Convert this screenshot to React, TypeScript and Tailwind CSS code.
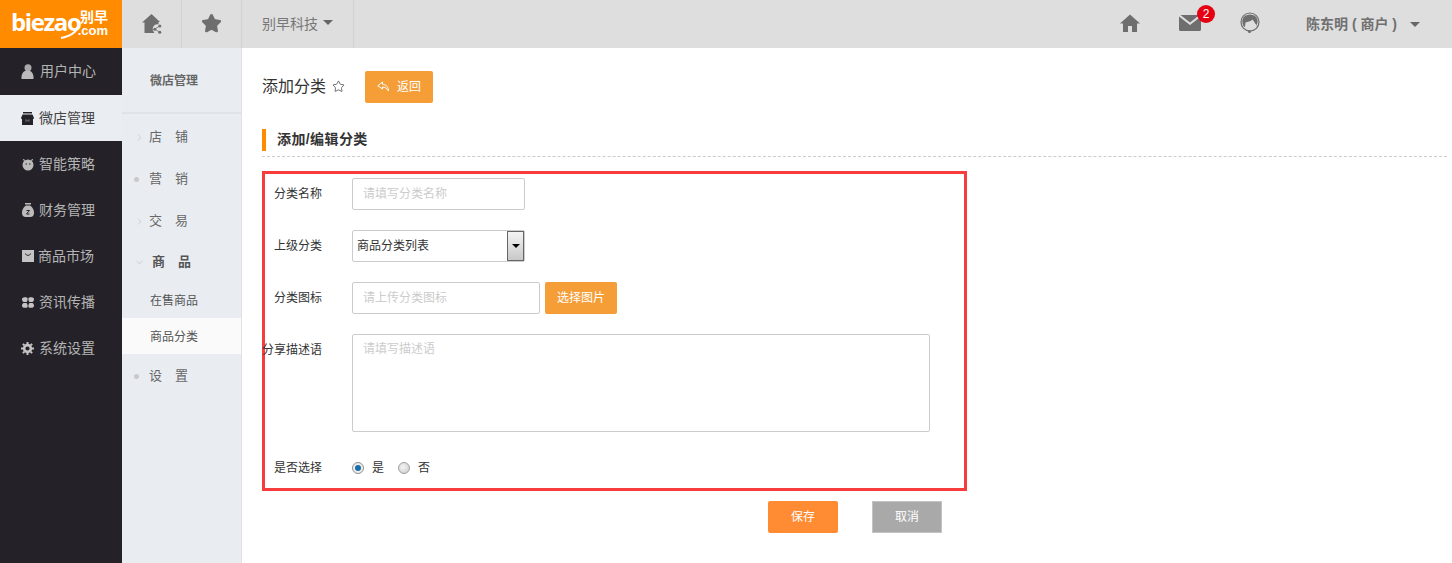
import { ChevronDown, ChevronRight, Star } from "lucide-react";
import type { ReactNode } from "react";

const font = { fontFamily: '"Liberation Sans", "Noto Sans CJK SC", sans-serif' };

function UserIcon() {
  return (
    <svg width="13" height="15" viewBox="0 0 13 15" fill="#bbb">
      <circle cx="7" cy="3.800" r="3.500" fill="#a9a9a9" />
      <path d="M0.500 15 C0 9 3 6.500 6.500 6.500 C10 6.500 13 9 12.500 15 Z" />
    </svg>
  );
}

function ShopIcon() {
  return (
    <svg width="13" height="13" viewBox="0 0 13 13" fill="#242228">
      <path d="M2 0 H11 V1.500 H2 Z" />
      <path d="M1.500 2.500 H11.500 L13 6 V6.500 L12 7 V13 H1 V7 L0 6.500 V6 Z" />
      <path d="M5 10 V7.500 L6.500 9 L8 7.500 V10" stroke="#888" strokeWidth="0.700" fill="none" />
    </svg>
  );
}

function ClockIcon() {
  return (
    <svg width="12" height="13" viewBox="0 0 12 13" fill="#bbb">
      <circle cx="6" cy="7" r="5.500" />
      <path d="M1 1.500 L3 2.500 M11 1.500 L9 2.500" stroke="#bbb" strokeWidth="1.200" />
      <path d="M3.500 6 H5 M7 6 H8.500" stroke="#242228" strokeWidth="1" />
    </svg>
  );
}

function BagIcon() {
  return (
    <svg width="12" height="14" viewBox="0 0 12 14" fill="#bbb">
      <path d="M3 0 H9 V1.500 H3 Z" />
      <path d="M4 2.500 H8 C11 4.500 12 7 12 10 C12 12.500 10.500 14 8.500 14 H3.500 C1.500 14 0 12.500 0 10 C0 7 1 4.500 4 2.500 Z" />
      <path d="M4.500 7.500 H7.500 L4.500 11 H7.500" stroke="#242228" strokeWidth="1" fill="none" />
    </svg>
  );
}

function MarketIcon() {
  return (
    <svg width="12" height="12" viewBox="0 0 12 12" fill="#c4c4c4">
      <rect width="12" height="12" />
      <path d="M3.500 3.500 C4 6 8 6 8.500 3.500" stroke="#242228" strokeWidth="1" fill="none" />
    </svg>
  );
}

function GridIcon() {
  return (
    <svg width="12" height="11" viewBox="0 0 12 11" fill="#c4c4c4">
      <path d="M0 2 C0 0 4.500 -0.500 5.500 1 C5.800 2 5.500 4 4.500 5 H2 C0.500 5 0 3.500 0 2 Z" />
      <path d="M12 2 C12 0 7.500 -0.500 6.500 1 C6.200 2 6.500 4 7.500 5 H10 C11.500 5 12 3.500 12 2 Z" />
      <path d="M0 9 C0 11 4.500 11.500 5.500 10 C5.800 9 5.500 7 4.500 6 H2 C0.500 6 0 7.500 0 9 Z" />
      <path d="M12 9 C12 11 7.500 11.500 6.500 10 C6.200 9 6.500 7 7.500 6 H10 C11.500 6 12 7.500 12 9 Z" />
    </svg>
  );
}

function GearIcon() {
  return (
    <svg width="13" height="13" viewBox="0 0 13 13">
      <circle cx="6.500" cy="6.500" r="3.400" fill="none" stroke="#c4c4c4" strokeWidth="2.600" />
      <path
        d="M6.500 0 V13 M0 6.500 H13 M1.900 1.900 L11.100 11.100 M11.100 1.900 L1.900 11.100"
        stroke="#c4c4c4"
        strokeWidth="2"
        strokeDasharray="2 9 2 0"
      />
    </svg>
  );
}

function HomeShareIcon() {
  return (
    <svg width="20" height="20" viewBox="0 0 20 20" fill="#6e6e6e">
      <path d="M9.500 0 L18 8 H16.500 V19 H2.500 V8.500 H0 Z" />
      <circle cx="15.500" cy="15" r="4.800" fill="#dedede" />
      <circle cx="17.800" cy="12" r="1.500" />
      <circle cx="12.800" cy="15.200" r="1.500" />
      <circle cx="17.800" cy="18.200" r="1.500" />
      <path d="M17.800 12 L12.800 15.200 L17.800 18.200" stroke="#6e6e6e" strokeWidth="0.800" fill="none" />
    </svg>
  );
}

function HomeIcon() {
  return (
    <svg width="20" height="18" viewBox="0 0 20 18" fill="#6e6e6e">
      <path d="M10 0.500 L20 9.500 H17 V18 H12 V12 H8 V18 H3 V9.500 H0 Z" />
    </svg>
  );
}

function MailIcon() {
  return (
    <svg width="22" height="16" viewBox="0 0 22 16" fill="#6e6e6e">
      <path d="M1.500 0 H20.500 L11 7.500 Z" />
      <path d="M0 1.500 L11 10 L22 1.500 V14.500 C22 15.300 21.300 16 20.500 16 H1.500 C0.700 16 0 15.300 0 14.500 Z" />
    </svg>
  );
}

function ServiceIcon() {
  return (
    <svg width="20" height="22" viewBox="0 0 20 22">
      <circle cx="10" cy="10" r="9" fill="none" stroke="#6e6e6e" strokeWidth="1.200" />
      <path
        d="M2.500 11 C1.500 6 5 2.500 10 2.500 C15 2.500 18.500 6 17.500 11 L16 14 C15.500 11 14 9.500 12.500 7.500 C11 9.500 7.500 10 5.500 10.500 L5 15 C3.500 14.500 2.800 13 2.500 11 Z"
        fill="#6e6e6e"
      />
      <path d="M6 11 C6 15 8 17 10 17 C12 17 14 15 14.500 12 L16 12 V15 L10 18 Z" fill="#dedede" />
      <circle cx="9.500" cy="19.500" r="1.600" fill="#6e6e6e" />
    </svg>
  );
}

function Logo() {
  return (
    <div className="flex h-12 w-[122px] shrink-0 items-center bg-[#ff8b00] pl-[11px] text-white">
      <div className="relative w-[67px] pb-[1px]">
        <span
          className="text-[24px] font-bold leading-none tracking-[-1.400px]"
          style={{ fontFamily: '"Open Sans", sans-serif' }}
        >
          biezao
        </span>
        {/* swoosh under and round the last letters */}
        <svg width="24" height="30" viewBox="0 0 24 30" className="absolute -top-[1px] left-[47px]" fill="none" stroke="#fff">
          <path d="M21 12 C22 20 15 27 3 29" strokeWidth="2" />
        </svg>
      </div>
      <div className="flex w-[30px] flex-col items-end">
        <span className="text-[14px] font-bold leading-[13px]">别早</span>
        <span className="text-[13px] font-bold leading-[13px]">.com</span>
      </div>
    </div>
  );
}

const mainMenu: { label: string; icon: ReactNode; cls: string; active?: boolean }[] = [
  { label: "用户中心", icon: <UserIcon />, cls: "h-[47px] gap-[6px] pb-[1px]" },
  { label: "微店管理", icon: <ShopIcon />, cls: "h-[46px] gap-[5px]", active: true },
  { label: "智能策略", icon: <ClockIcon />, cls: "h-[46px] gap-[5px]" },
  { label: "财务管理", icon: <BagIcon />, cls: "h-[46px] gap-[5px]" },
  { label: "商品市场", icon: <MarketIcon />, cls: "h-[46px] gap-[4px]" },
  { label: "资讯传播", icon: <GridIcon />, cls: "h-[46px] gap-[5px]" },
  { label: "系统设置", icon: <GearIcon />, cls: "h-[46px] gap-[5px]" },
];

function MainSidebar() {
  return (
    <div className="w-[122px] shrink-0 bg-[#242228]">
      {mainMenu.map((item) => (
        <div
          key={item.label}
          className={`flex items-center pl-[21px] text-[14px] ${item.cls} ${
            item.active ? "bg-[#eaedf1] text-[#444]" : "text-[#b4b4b4]"
          }`}
        >
          <span className="flex w-[13px] justify-center">{item.icon}</span>
          {item.label}
        </div>
      ))}
    </div>
  );
}

function SubGroup({ label, mark, bold }: { label: string; mark: "right" | "dot" | "down"; bold?: boolean }) {
  return (
    <div className={bold ? "flex h-[40px] items-center pl-[12px]" : "flex h-[42px] items-center pl-[12px]"}>
      <span className="flex w-[15px] items-center">
        {mark === "right" && <ChevronRight size={11} strokeWidth={1} className="text-[#aaa]" />}
        {mark === "down" && <ChevronDown size={11} strokeWidth={1} className="text-[#aaa]" />}
        {mark === "dot" && <span className="h-[5px] w-[5px] rounded-full bg-[#c8c8c8]" />}
      </span>
      <span className={bold ? "pl-[3px] text-[13px] font-bold tracking-[13px] text-[#555]" : "text-[13px] tracking-[13px] text-[#666]"}>
        {label}
      </span>
    </div>
  );
}

function SubSidebar() {
  return (
    <div className="w-[120px] shrink-0 border-r border-[#dfe3e8] bg-[#e9edf2]">
      <div className="flex h-[66px] items-center border-b-2 border-[#dfe3e8] pl-[28px] pt-[2px] text-[12px] font-bold text-[#666]">
        微店管理
      </div>
      <div className="pt-[2px]">
        <SubGroup label="店铺" mark="right" />
        <SubGroup label="营销" mark="dot" />
        <SubGroup label="交易" mark="right" />
        <SubGroup label="商品" mark="down" bold />
        <div className="flex h-[36px] items-center pl-[28px] pt-[1px] text-[12px] text-[#555]">在售商品</div>
        <div className="flex h-[36px] items-center bg-[#fafafa] pl-[28px] pt-[1px] text-[12px] text-[#555]">商品分类</div>
        <div className="pt-[1px]">
          <SubGroup label="设置" mark="dot" />
        </div>
      </div>
    </div>
  );
}

function Field({ label, top, children }: { label: string; top?: boolean; children: ReactNode }) {
  return (
    <div className={top ? "flex items-start" : "flex items-center"}>
      <label
        className={
          top
            ? "w-[57px] shrink-0 whitespace-nowrap pt-[7px] text-right text-[12px] text-[#333] [direction:rtl]"
            : "w-[57px] shrink-0 whitespace-nowrap text-right text-[12px] text-[#333]"
        }
      >
        {label}
      </label>
      <div className="ml-[30px] flex items-center">{children}</div>
    </div>
  );
}

function Radio({ checked }: { checked?: boolean }) {
  return (
    <span
      className={
        checked
          ? "flex h-3 w-3 shrink-0 items-center justify-center rounded-full border border-[#8f8f8f] bg-[#eee]"
          : "block h-3 w-3 shrink-0 rounded-full border border-[#a0a0a0] bg-[radial-gradient(circle_at_40%_40%,#f4f4f4,#c8c8c8)]"
      }
    >
      {checked && <span className="h-[6px] w-[6px] rounded-full bg-[#1a6ea8]" />}
    </span>
  );
}

function Form() {
  return (
    <div className="flex h-[320px] w-[705px] flex-col gap-5 border-[3px] border-[#f63c3c] pt-1">
      <Field label="分类名称">
        <input
          placeholder="请填写分类名称"
          className="h-8 w-[173px] rounded-[2px] border border-[#ccc] px-[10px] text-[12px] outline-none placeholder:text-[#ccc]"
        />
      </Field>
      <Field label="上级分类">
        <div className="flex h-8 w-[173px] items-center justify-between rounded-[2px] border border-[#ccc] pl-[4px] text-[12px] text-[#333]">
          商品分类列表
          <span className="flex h-[30px] w-[17px] items-center justify-center border border-[#666] bg-[linear-gradient(#f4f4f4,#c8c8c8)]">
            <span className="h-0 w-0 border-x-[4px] border-t-[4px] border-x-transparent border-t-black" />
          </span>
        </div>
      </Field>
      <Field label="分类图标">
        <input
          placeholder="请上传分类图标"
          className="h-8 w-[188px] rounded-[2px] border border-[#ccc] px-[10px] text-[12px] outline-none placeholder:text-[#ccc]"
        />
        <button className="ml-[5px] h-8 w-[72px] rounded-[2px] bg-[#f59e38] text-[12px] text-white">选择图片</button>
      </Field>
      <Field label="分享描述语" top>
        <textarea
          placeholder="请填写描述语"
          className="h-[98px] w-[578px] resize-none rounded-[2px] border border-[#ccc] px-[10px] py-[5px] text-[12px] outline-none placeholder:text-[#ccc]"
        />
      </Field>
      <div className="pt-[7px]">
        <Field label="是否选择">
          <div className="flex items-center text-[12px] text-[#333]">
            <Radio checked />
            <span className="ml-2">是</span>
            <span className="ml-[14px]">
              <Radio />
            </span>
            <span className="ml-2">否</span>
          </div>
        </Field>
      </div>
    </div>
  );
}

export default function App() {
  return (
    <div className="flex h-[563px] w-[1452px] flex-col overflow-hidden bg-white" style={font}>
      {/* top bar */}
      <div className="flex h-12 shrink-0 items-stretch bg-[#dedede]">
        <Logo />
        <div className="flex w-[60px] items-center justify-center border-r border-[#d2d2d2]">
          <HomeShareIcon />
        </div>
        <div className="flex w-[60px] items-center justify-center border-r border-[#d2d2d2] pb-[2px]">
          <Star size={21} fill="#6e6e6e" stroke="#6e6e6e" />
        </div>
        <div className="flex w-[112px] items-center gap-[5px] border-r border-[#d2d2d2] pl-5 text-[14px] text-[#777]">
          别早科技
          <span className="mb-[3px] h-0 w-0 border-x-[5px] border-t-[5px] border-x-transparent border-t-[#666]" />
        </div>
        <div className="flex flex-1 items-center justify-end">
          <span className="mb-[2px]">
            <HomeIcon />
          </span>
          <div className="relative mb-[2px] ml-[39px]">
            <MailIcon />
            <span className="absolute -top-[10px] left-[18px] flex h-[18px] w-[18px] items-center justify-center rounded-full bg-[#e60012] text-[12px] text-white">
              2
            </span>
          </div>
          <div className="mb-[2px] ml-[39px]">
            <ServiceIcon />
          </div>
          <span className="ml-[46px] w-[94px] whitespace-pre text-[14px] font-bold text-[#707070]">陈东明 ( 商户 )</span>
          <span className="ml-[10px] mr-[32px] h-0 w-0 border-x-[5px] border-t-[5px] border-x-transparent border-t-[#666]" />
        </div>
      </div>

      <div className="flex flex-1">
        <MainSidebar />
        <SubSidebar />
        <div className="flex-1 pl-5">
          <div className="mt-[15px] flex h-[47px] items-center">
            <span className="text-[16px] text-[#333]">添加分类</span>
            <Star size={13} strokeWidth={1.300} className="ml-[6px] text-[#333]" />
            <button className="ml-[20px] flex h-8 w-[68px] items-center justify-center gap-[8px] rounded-[2px] bg-[#f59e38] text-[12px] text-white">
              <svg width="12" height="11" viewBox="0 0 12 11" fill="none" stroke="#fff" strokeWidth="1">
                <path d="M5.500 1 L0.800 4.800 L5.500 8 V6 C8 6 10 7.500 11.500 10 C11.500 6 9 3.500 5.500 3.300 Z" />
              </svg>
              返回
            </button>
          </div>
          <div className="mr-[5px] mt-[19px] flex h-[28px] items-center border-b border-dashed border-[#ccc] pb-[6px]">
            <div className="flex h-[22px] items-center border-l-4 border-[#ff8b00] pl-[11px] text-[14px] font-bold tracking-[0.400px] text-[#333]">
              添加/编辑分类
            </div>
          </div>
          <div className="mt-[14px]">
            <Form />
          </div>
          <div className="ml-[506px] mt-[10px] flex gap-[34px]">
            <button className="h-8 w-[70px] rounded-[2px] bg-[#ff8c33] text-[12px] text-white">保存</button>
            <button className="h-8 w-[70px] border border-[#c4c4c4] bg-[#a9a9a9] text-[12px] text-white">取消</button>
          </div>
        </div>
      </div>
    </div>
  );
}
